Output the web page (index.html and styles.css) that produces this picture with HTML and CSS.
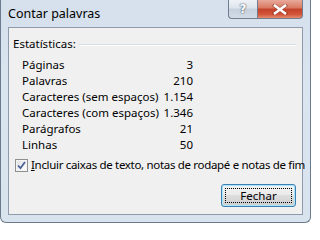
FILE: index.html
```html
<!DOCTYPE html>
<html lang="pt">
<head>
<meta charset="utf-8">
<title>Contar palavras</title>
<link rel="stylesheet" href="styles.css">
</head>
<body>
<div class="window">
  <div class="titlebar">
    <span class="title">Contar palavras</span>
    <div class="caption-buttons">
      <div class="cap-btn help">?</div>
      <div class="cap-btn close">
        <svg width="16" height="11" viewBox="0 0 16 11">
          <path d="M2.5 1.5 L13.5 9.5 M13.5 1.5 L2.5 9.5" stroke="#6a2418" stroke-width="4" stroke-linecap="square" fill="none" opacity="0.4"/>
          <path d="M3 1.8 L13 9.2 M13 1.8 L3 9.2" stroke="#ffffff" stroke-width="2.6" stroke-linecap="square" fill="none"/>
        </svg>
      </div>
    </div>
  </div>
  <div class="client">
    <div class="group-head">
      <span class="group-title">Estatísticas:</span>
      <div class="rule"></div>
    </div>
    <div class="stats">
      <span>Páginas</span><span class="num">3</span>
      <span>Palavras</span><span class="num">210</span>
      <span>Caracteres (sem espaços)</span><span class="num">1.154</span>
      <span>Caracteres (com espaços)</span><span class="num">1.346</span>
      <span>Parágrafos</span><span class="num">21</span>
      <span>Linhas</span><span class="num">50</span>
    </div>
    <div class="check">
      <span class="box">
        <svg width="9" height="9" viewBox="0 0 9 9">
          <path d="M1 4.5 L3.5 7.2 L8 1" stroke="#4a5f97" stroke-width="1.8" fill="none"/>
        </svg>
      </span>
      <span class="check-label"><u>I</u>ncluir caixas de texto, notas de rodapé e notas de fim</span>
    </div>
    <div class="actions">
      <div class="button"><span class="focus">Fechar</span></div>
    </div>
  </div>
</div>
</body>
</html>
```
FILE: styles.css
```css
html, body {
  margin: 0;
  padding: 0;
}
body {
  width: 311px;
  height: 223px;
  overflow: hidden;
  font-family: "Noto Sans", sans-serif;
  font-size: 11.5px;
  color: #000;
}
.window {
  box-sizing: border-box;
  width: 311px;
  height: 223px;
  padding: 0 7px 7px 7px;
  border: 1px solid #6b7a8c;
  border-top: none;
  border-radius: 0 0 6px 6px;
  background: linear-gradient(to bottom, #d5e0ec 0%, #dbe5f0 40%, #d8e3ee 100%);
  display: flex;
  flex-direction: column;
}
.titlebar {
  height: 27px;
  display: flex;
  justify-content: space-between;
  align-items: flex-start;
}
.title {
  font-size: 12.5px;
  line-height: 16px;
  margin-top: 6px;
  color: #000;
}
.caption-buttons {
  display: flex;
}
.cap-btn {
  box-sizing: border-box;
  height: 19px;
  border: 1px solid #6f7d8f;
  border-top: none;
  display: flex;
  align-items: center;
  justify-content: center;
}
.help {
  width: 29px;
  border-right: none;
  border-radius: 0 0 0 4px;
  background: linear-gradient(to bottom, #eef2f6 0%, #dde4ec 45%, #c6d0dc 50%, #d2dce6 100%);
  color: #fff;
  font-family: "DejaVu Sans", sans-serif;
  font-weight: bold;
  font-size: 12px;
  text-shadow: 0 0 2px #4a5668, 0 0 1px #4a5668;
}
.close {
  width: 46px;
  border-radius: 0 0 4px 0;
  background: linear-gradient(to bottom, #e9a99c 0%, #d9785f 45%, #c2412a 50%, #d4553a 80%, #e58a6e 100%);
}
.client {
  flex: 1;
  border: 1px solid #8d9bab;
  background: #f0f0f0;
  display: flex;
  flex-direction: column;
  padding: 8px 6px 0 4px;
}
.group-head {
  display: flex;
  align-items: center;
  height: 16px;
}
.group-title {
  line-height: 16px;
}
.rule {
  flex: 1;
  margin-left: 3px;
  margin-top: 1px;
  border-top: 1px solid #d5dfe5;
  border-bottom: 1px solid #ffffff;
}
.stats {
  margin-top: 5px;
  margin-left: 9px;
  width: 171px;
  display: grid;
  grid-template-columns: 1fr auto;
  grid-auto-rows: 16px;
  line-height: 16px;
}
.num {
  text-align: right;
}
.check {
  margin-top: 4px;
  margin-left: 2px;
  display: flex;
  align-items: center;
  height: 16px;
  line-height: 16px;
  white-space: nowrap;
}
.box {
  box-sizing: border-box;
  flex: none;
  width: 13px;
  height: 13px;
  border: 1px solid #8f8f8f;
  background: linear-gradient(135deg, #dcdcdc 0%, #f4f4f4 60%, #ffffff 100%);
  display: flex;
  align-items: center;
  justify-content: center;
  box-shadow: inset 0 0 0 1px #f4f4f4;
}
.check-label {
  margin-left: 3px;
  letter-spacing: -0.32px;
}
.actions {
  display: flex;
  justify-content: flex-end;
  margin-top: 11px;
}
.button {
  box-sizing: border-box;
  width: 75px;
  height: 23px;
  border: 1px solid #3c7fb1;
  border-radius: 3px;
  background: linear-gradient(to bottom, #f2f2f2 0%, #ebebeb 45%, #dddddd 50%, #cfcfcf 100%);
  box-shadow: inset 0 0 0 1px #a8e4fb;
  padding: 3px;
  display: flex;
}
.focus {
  flex: 1;
  border: 1px dotted #000;
  display: flex;
  align-items: center;
  justify-content: center;
  line-height: 13px;
}
```
